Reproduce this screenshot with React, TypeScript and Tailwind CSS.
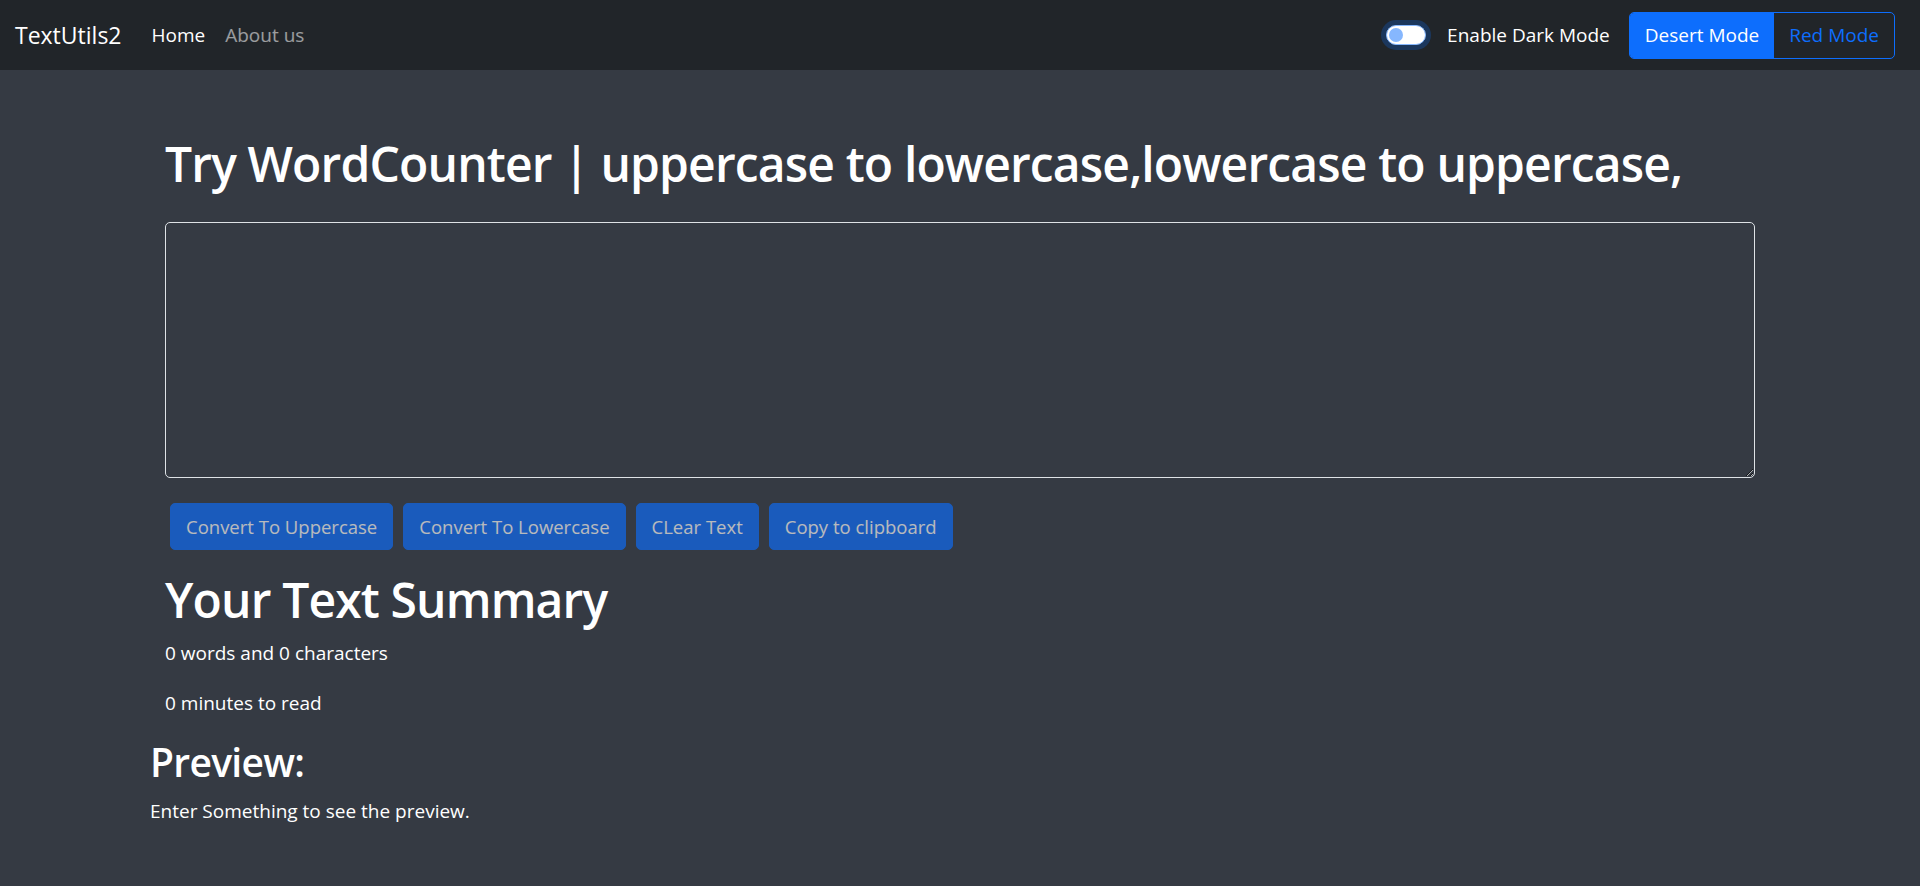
import React from "react";

const font = { fontFamily: '"Open Sans", "Noto Sans", sans-serif' };

function Switch() {
  return (
    <div className="relative w-[40px] h-[20px] rounded-full bg-white border border-[#86b7fe] shadow-[0_0_0_5px_rgba(13,110,253,0.25)]">
      <div className="absolute left-[2px] top-[2px] w-[14px] h-[14px] rounded-full bg-[#86b7fe]" />
    </div>
  );
}

const btn =
  "mx-[5px] my-[5px] h-[47px] px-[15px] rounded-[5px] border border-[#0d6efd] bg-[#0d6efd] text-white text-[18.5px] leading-[30px] opacity-65";

export default function App() {
  return (
    <div className="min-h-[886px] bg-[#353a43] text-white" style={font}>
      <nav className="h-[70px] bg-[#212529] flex items-center justify-between pl-[15px] pr-[25px]">
        <div className="flex items-center">
          <span className="text-[23px] leading-[30px] mr-[20px] text-white">TextUtils2</span>
          <a className="px-[10px] text-[19px] leading-[30px] text-white">Home</a>
          <a className="px-[10px] text-[19px] leading-[30px] text-white/55">About us</a>
        </div>
        <div className="flex items-center">
          <Switch />
          <span className="ml-[21px] text-[19px] leading-[30px] text-white">Enable Dark Mode</span>
          <div className="ml-[19px] flex h-[47px] rounded-[5px] border border-[#0d6efd] overflow-hidden">
            <button className="px-[15px] text-[19px] leading-[30px] bg-[#0d6efd] text-white">Desert Mode</button>
            <button className="px-[15px] text-[19px] leading-[30px] text-[#0d6efd]">Red Mode</button>
          </div>
        </div>
      </nav>

      <div className="w-[1620px] mx-auto">
        <div className="px-[15px]">
          <h1 className="mt-[64px] mb-[28px] text-[48px] leading-[60px] font-semibold tracking-[-0.85px]">
            Try WordCounter | uppercase to lowercase,lowercase to uppercase,
          </h1>
          <div className="mb-[20px]">
            <textarea
              rows={8}
              className="block w-full h-[256px] rounded-[5px] border border-[#dee2e6] bg-transparent px-[15px] py-[7px] text-[19px] leading-[30px] text-white outline-none"
            />
          </div>
          <div className="flex flex-wrap">
            <button className={btn}>Convert To Uppercase</button>
            <button className={btn}>Convert To Lowercase</button>
            <button className={btn}>CLear Text</button>
            <button className={btn}>Copy to clipboard</button>
          </div>
          <h1 className="mt-[15px] mb-[8px] text-[48px] leading-[60px] font-semibold tracking-[-0.85px]">Your Text Summary</h1>
          <p className="mb-[20px] text-[19px] leading-[30px]">0 words and 0 characters</p>
          <p className="mb-[20px] text-[19px] leading-[30px]">0 minutes to read</p>
        </div>
        <h2 className="mb-[10px] text-[39px] leading-[48px] font-semibold tracking-[-0.7px]">Preview:</h2>
        <p className="text-[19px] leading-[30px]">Enter Something to see the preview.</p>
      </div>
    </div>
  );
}
